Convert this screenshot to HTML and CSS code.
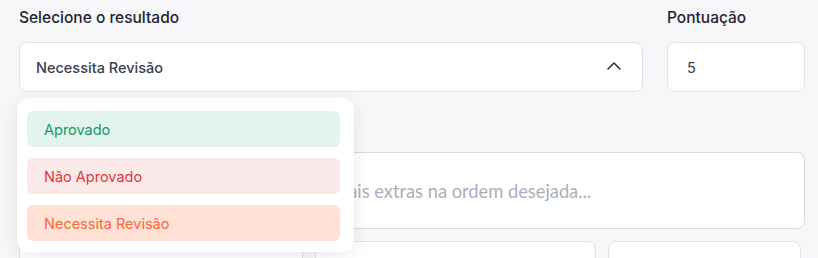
FILE: index.html
```html
<!DOCTYPE html>
<html lang="pt-BR">
<head>
    <meta charset="UTF-8">
    <meta name="viewport" content="width=device-width, initial-scale=1.0">
    <title>Resultado</title>
    <link rel="stylesheet" href="styles.css">
</head>
<body>
    <div class="form">
        <div class="row-top">
            <div class="field">
                <label class="field-label">Selecione o resultado</label>
                <div class="select">
                    <span>Necessita Revisão</span>
                    <svg class="chevron" width="16" height="16" viewBox="0 0 16 16">
                        <path d="M2 11 L8 5 L14 11" fill="none" stroke="#2c3140" stroke-width="1.6" stroke-linecap="round" stroke-linejoin="round"/>
                    </svg>
                </div>

                <!-- open dropdown -->
                <div class="dropdown">
                    <div class="option approved">Aprovado</div>
                    <div class="option rejected">Não Aprovado</div>
                    <div class="option review">Necessita Revisão</div>
                </div>
            </div>
            <div class="field">
                <label class="field-label">Pontuação</label>
                <div class="input">5</div>
            </div>
        </div>

        <div class="field">
            <label class="field-label">Observações</label>
            <div class="textarea">Anote os itens, as ferramentas e materiais extras na ordem desejada...</div>
        </div>

        <div class="row-bottom">
            <div class="box">Quantidade</div>
            <div class="box">0</div>
            <div class="box">$</div>
        </div>
    </div>
</body>
</html>
```

FILE: styles.css
```css
body {
    margin: 0;
    background-color: #f7f7f9;
    font-family: Inter, "Noto Sans", sans-serif;
    color: #1f2430;
    overflow: hidden;
}
.form {
    padding: 8px 13px 0 19px;
    display: flex;
    flex-direction: column;
    gap: 26px;
}
.row-top {
    display: grid;
    grid-template-columns: 1fr 138px;
    gap: 24px;
}
.field {
    position: relative;
    display: flex;
    flex-direction: column;
}
.field-label {
    font-size: 15.5px;
    font-weight: 500;
    line-height: 20px;
    margin-bottom: 14px;
}
.select {
    height: 50px;
    box-sizing: border-box;
    background-color: #fff;
    border: 1px solid #e1e1ec;
    border-radius: 8px;
    padding: 0 20px 0 16px;
    display: flex;
    align-items: center;
    justify-content: space-between;
    font-size: 14.5px;
    font-weight: 500;
    color: #3a4050;
}
.chevron {
    margin-top: -3px;
}
.input {
    height: 50px;
    box-sizing: border-box;
    background-color: #fff;
    border: 1px solid #e1e1ec;
    border-radius: 8px;
    padding: 0 19px;
    display: flex;
    align-items: center;
    font-size: 14.5px;
    color: #3a4050;
}
.textarea {
    height: 77px;
    box-sizing: border-box;
    background-color: #fff;
    border: 1px solid #d9d9de;
    border-radius: 8px;
    padding: 0 16px;
    display: flex;
    align-items: center;
    font-family: Lato, sans-serif;
    font-size: 18.3px;
    color: #a9b0bb;
    white-space: nowrap;
}
.row-bottom {
    display: grid;
    grid-template-columns: 284px 281px 193px;
    gap: 12px;
    margin-top: -14px;
}
.box {
    height: 40px;
    box-sizing: border-box;
    background-color: #fff;
    border: 1px solid #e1e1ec;
    border-radius: 8px;
    padding: 14px 24px 0;
    font-size: 15px;
    color: #3a4050;
}
.dropdown {
    position: absolute;
    top: 90px;
    left: -2px;
    width: 337px;
    box-sizing: border-box;
    padding: 13px 14px 11px 10px;
    background-color: #fff;
    border-radius: 12px;
    box-shadow: 0 4px 18px rgba(30, 35, 60, 0.09);
    display: flex;
    flex-direction: column;
    gap: 11px;
    z-index: 10;
}
.option {
    height: 36px;
    border-radius: 6px;
    padding: 0 17px;
    display: flex;
    align-items: center;
    font-size: 14.5px;
}
.approved {
    background-color: #e3f4ee;
    color: #17976a;
}
.rejected {
    background-color: #fce9e9;
    color: #e0363f;
}
.review {
    background-color: #ffe1d5;
    color: #f46a3a;
}
```
